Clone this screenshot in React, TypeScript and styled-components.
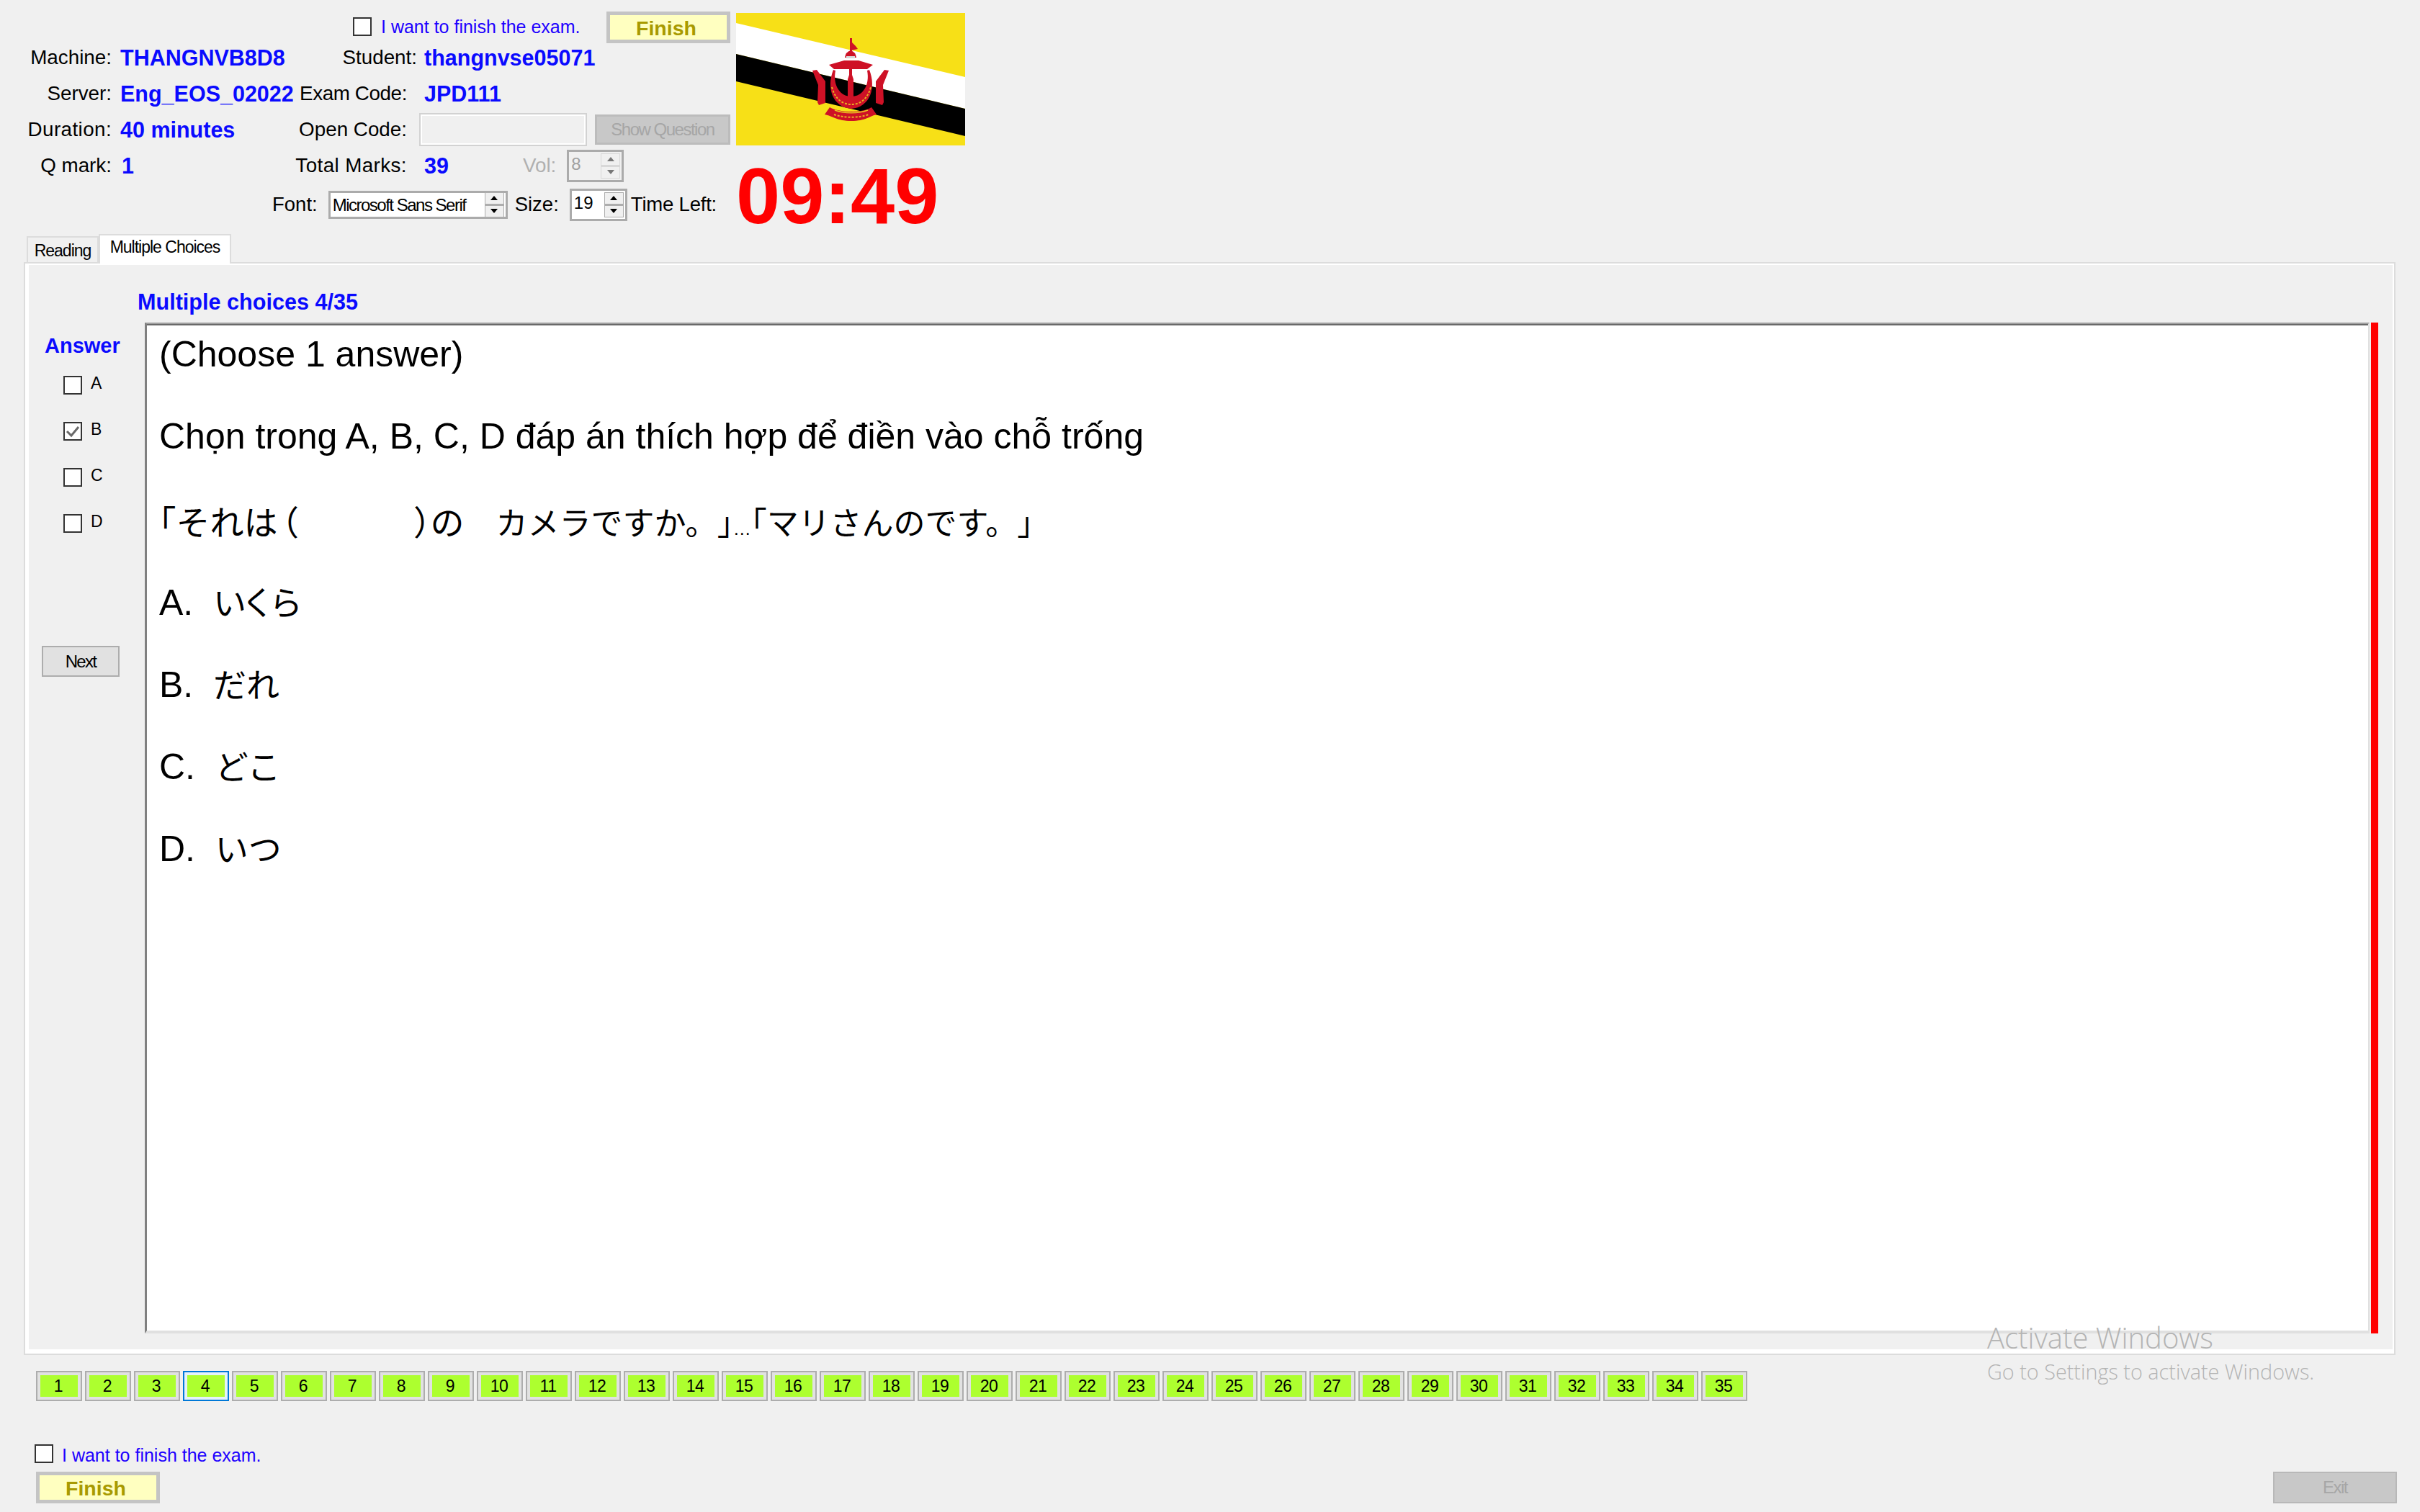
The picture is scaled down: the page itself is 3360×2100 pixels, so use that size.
import * as React from 'react'
import styled, { createGlobalStyle } from 'styled-components'

const SANS = `"Liberation Sans", Arial, sans-serif`
const BLUE = '#0a0aff'

const GlobalStyle = createGlobalStyle`
  html, body {
    margin: 0;
    width: 3360px;
    height: 2100px;
    overflow: hidden;
    background: #f0f0f0;
    font-family: ${SANS};
  }
`

const Page = styled.div`
  position: relative;
  width: 3360px;
  height: 2100px;
  overflow: hidden;
  background: #f0f0f0;
  color: #000;
`

const Header = styled.header`
  display: flex;
  height: 308px;
  padding-top: 16px;
`

const InfoColumn = styled.div`
  width: 1014px;
  display: flex;
  flex-direction: column;
`

const TopRow = styled.div`
  display: flex;
  align-items: flex-start;
  height: 39px;
  padding-left: 490px;
`

const FinishTopLabel = styled.label`
  display: flex;
  align-items: center;
  gap: 13px;
  width: 352px;
  height: 42px;
  font-size: 25px;
  color: #2000ff;
`

const CheckBox = styled.span`
  box-sizing: border-box;
  display: inline-flex;
  align-items: center;
  justify-content: center;
  flex: none;
  width: 26px;
  height: 26px;
  border: 2px solid #333;
  background: #fff;
`

const FinishButton = styled.button`
  box-sizing: border-box;
  width: 172px;
  height: 44px;
  padding: 2px 6px 0 0;
  border: 5px solid #c4c4c4;
  outline: none;
  background: #ffffc0;
  color: #a89a00;
  font-family: ${SANS};
  font-size: 28.5px;
  font-weight: 700;
  line-height: 32px;
`

const InfoGrid = styled.div`
  display: grid;
  grid-template-columns: 155px 255px 155px 449px;
  grid-auto-rows: 50px;
`

const Label = styled.span<{ $overhang?: number; $muted?: boolean; $track?: number }>`
  align-self: center;
  justify-self: end;
  margin-right: ${p => -(p.$overhang ?? 0)}px;
  font-size: 27.8px;
  line-height: 32px;
  letter-spacing: ${p => p.$track ?? 0}px;
  white-space: nowrap;
  color: ${p => (p.$muted ? '#b0b0b0' : '#000')};
`

const Value = styled.span<{ $indent: number }>`
  align-self: center;
  padding-left: ${p => p.$indent}px;
  font-size: 30.5px;
  font-weight: 700;
  line-height: 34px;
  white-space: nowrap;
  color: ${BLUE};
`

const ValueCell = styled.div`
  display: flex;
  align-items: center;
`

const OpenCodeInput = styled.div`
  box-sizing: border-box;
  width: 233px;
  height: 46px;
  margin-left: 17px;
  border: 4px solid #fff;
  outline: 2px solid #d2d2d2;
  outline-offset: -2px;
  background: #f0f0f0;
`

const ShowQuestion = styled.button`
  box-sizing: border-box;
  width: 188px;
  height: 42px;
  margin-left: 11px;
  padding: 0;
  border: 3px solid #bcbcbc;
  background: #c8c8c8;
  color: #a6a6a6;
  font-family: ${SANS};
  font-size: 24px;
  letter-spacing: -1.5px;
`

const VolGroup = styled.div`
  display: flex;
  align-items: center;
  margin-left: 103px;
  gap: 15px;
`

const FontRow = styled.div`
  display: flex;
  align-items: center;
  height: 58px;
  padding-left: 378px;
`

const Spinner = styled.div<{ $width: number; $height: number; $disabled?: boolean }>`
  box-sizing: border-box;
  display: flex;
  align-items: center;
  justify-content: space-between;
  width: ${p => p.$width}px;
  height: ${p => p.$height}px;
  padding: 0 2px 0 3px;
  border: 3px solid #ababab;
  background: ${p => (p.$disabled ? '#f0f0f0' : '#fff')};
  color: ${p => (p.$disabled ? '#a0a0a0' : '#000')};
  font-size: 24px;
  white-space: nowrap;
`

const SpinText = styled.span<{ $tight?: boolean }>`
  align-self: flex-start;
  line-height: 34px;
  letter-spacing: ${p => (p.$tight ? '-1.5px' : '0')};
`

const SpinButtons = styled.div<{ $disabled?: boolean }>`
  box-sizing: border-box;
  display: flex;
  flex-direction: column;
  flex: none;
  width: 27px;
  height: 35px;
  border: 1px solid ${p => (p.$disabled ? '#d8d8d8' : '#adadad')};
  background: ${p => (p.$disabled ? '#d8d8d8' : '#adadad')};
  gap: 3px;
`

const SpinPart = styled.div`
  flex: 1;
  display: flex;
  align-items: center;
  justify-content: center;
  background: #f0f0f0;
`

const Arrow = styled.span<{ $down?: boolean; $disabled?: boolean }>`
  width: 0;
  height: 0;
  border-left: 5px solid transparent;
  border-right: 5px solid transparent;
  ${p => (p.$down ? 'border-top' : 'border-bottom')}: 6px solid ${p => (p.$disabled ? '#777' : '#000')};
`

const FontLabel = styled.span<{ $gapRight: number; $gapLeft?: number; $tight?: boolean }>`
  margin: 0 ${p => p.$gapRight}px 0 ${p => p.$gapLeft ?? 0}px;
  font-size: 27.5px;
  white-space: nowrap;
  letter-spacing: ${p => (p.$tight ? '-0.2px' : '0')};
`

const FlagColumn = styled.div`
  display: flex;
  flex-direction: column;
  margin-left: 8px;
  padding-top: 2px;
`

const FlagSvg = styled.svg`
  display: block;
  flex: none;
  width: 318px;
  height: 184px;
`

const Timer = styled.div`
  margin: 10px 0 0 0;
  font-size: 110px;
  font-weight: 700;
  line-height: 120px;
  color: #ff0000;
  white-space: nowrap;
`

const Tabs = styled.div`
  display: flex;
  align-items: flex-end;
  box-sizing: border-box;
  height: 40px;
  padding-left: 37px;
`

const Tab = styled.div<{ $active?: boolean }>`
  box-sizing: border-box;
  display: flex;
  justify-content: center;
  height: ${p => (p.$active ? 41 : 36)}px;
  margin-bottom: ${p => (p.$active ? -2 : 0)}px;
  width: ${p => (p.$active ? 184 : 100)}px;
  border: 2px solid #dcdcdc;
  border-bottom: none;
  background: ${p => (p.$active ? '#fff' : '#f0f0f0')};
  font-size: 23px;
  letter-spacing: -1px;
  line-height: ${p => (p.$active ? 32 : 36)}px;
  position: relative;
  z-index: 1;
`

const Panel = styled.section`
  box-sizing: border-box;
  width: 3293px;
  height: 1518px;
  margin-left: 33px;
  border: 2px solid #dcdcdc;
  background: #f0f0f0;
  box-shadow: inset 5px 0 0 #fff, inset -2px 0 0 #fff, inset 0 -6px 0 #fff, inset 0 2px 0 #fff;
  padding: 2px 2px 6px 5px;
  display: flex;
  flex-direction: column;
`

const PanelTitle = styled.h2`
  box-sizing: border-box;
  height: 80px;
  margin: 0;
  padding: 34px 0 0 151px;
  font-size: 30.6px;
  font-weight: 700;
  line-height: 34px;
  color: ${BLUE};
`

const PanelBody = styled.div`
  display: flex;
  height: 1404px;
`

const AnswerColumn = styled.div`
  box-sizing: border-box;
  width: 161px;
  flex: none;
  display: flex;
  flex-direction: column;
`

const AnswerTitle = styled.div`
  margin: 17px 0 27px 22px;
  font-size: 29px;
  font-weight: 700;
  line-height: 30px;
  color: ${BLUE};
`

const OptionList = styled.div`
  display: flex;
  flex-direction: column;
  gap: 39px;
  padding-left: 48px;
`

const Option = styled.div`
  display: flex;
  align-items: center;
  gap: 12px;
  height: 25px;
  font-size: 23px;
  letter-spacing: -0.5px;
`

const OptionLetter = styled.span`
  position: relative;
  top: -2px;
`

const NextButton = styled.button`
  box-sizing: border-box;
  width: 108px;
  height: 43px;
  margin: 158px 0 0 18px;
  padding: 0;
  border: 2px solid #adadad;
  background: #e1e1e1;
  font-family: ${SANS};
  font-size: 24px;
  letter-spacing: -1.7px;
  color: #000;
`

const Question = styled.article`
  box-sizing: border-box;
  width: 3089px;
  flex: none;
  padding: 15px 0 0 17px;
  border-style: solid;
  border-width: 2px 2px 4px 3px;
  border-color: #a0a0a0 #e0e0e0 #e0e0e0 #808080;
  box-shadow: inset 0 2px 0 #696969;
  background: #fff;
  display: flex;
  flex-direction: column;
  gap: 59px;
`

const QuestionLine = styled.p`
  margin: 0;
  height: 55px;
  font-size: 50px;
  line-height: 55px;
  white-space: pre;
`

const Jp = styled.span<{ $size: number; $track?: number; $raise?: number }>`
  font-family: "Noto Sans CJK JP", sans-serif;
  font-size: ${p => p.$size}px;
  font-weight: 400;
  line-height: 55px;
  letter-spacing: ${p => p.$track ?? 0}px;
  vertical-align: ${p => p.$raise ?? 0}px;
  text-spacing-trim: space-all;
`

const HalfPunct = styled.span<{ $lead?: number }>`
  font-feature-settings: "halt";
  margin-left: ${p => p.$lead ?? 0}px;
`

const BlankRun = styled.span`
  font-size: 53px;
`

const Dots = styled.span`
  font-family: ${SANS};
  font-size: 25px;
`

const RedBar = styled.div`
  width: 10px;
  margin-left: 2px;
  background: #ff0000;
`

const NavRow = styled.nav`
  display: flex;
  gap: 4px;
  margin-top: 22px;
  padding-left: 50px;
`

const NavButton = styled.button<{ $current?: boolean }>`
  box-sizing: border-box;
  width: 64px;
  height: 42px;
  padding: 0;
  border: 2px solid ${p => (p.$current ? '#0078d7' : '#adadad')};
  background: ${p => (p.$current ? '#e5f1fb' : '#e1e1e1')};
  display: flex;
  align-items: stretch;
`

const NavFace = styled.span`
  flex: 1;
  margin: 4px;
  padding-right: 2px;
  background: #adff2f;
  font-family: ${SANS};
  font-size: 23px;
  line-height: 30px;
  letter-spacing: -0.5px;
  color: #000;
  text-align: center;
`

const Footer = styled.footer`
  display: flex;
  justify-content: space-between;
  align-items: flex-end;
  margin-top: 60px;
  padding: 0 32px 0 48px;
`

const FooterLeft = styled.div`
  display: flex;
  flex-direction: column;
  gap: 12px;
`

const FooterCheck = styled.label`
  display: flex;
  align-items: center;
  gap: 12px;
  height: 26px;
  font-size: 25px;
  color: #2000ff;
`

const FooterCheckText = styled.span`
  padding-top: 4px;
`

const FooterFinish = styled(FinishButton)`
  margin-left: 2px;
`

const ExitButton = styled.button`
  box-sizing: border-box;
  width: 172px;
  height: 44px;
  padding: 0;
  border: 2px solid #b8b8b8;
  background: #c8c8c8;
  color: #a6a6a6;
  font-family: ${SANS};
  font-size: 24px;
  letter-spacing: -1.5px;
`

const Watermark = styled.div`
  position: absolute;
  left: 2759px;
  top: 1832px;
  font-family: "Open Sans", "Noto Sans", sans-serif;
  font-weight: 300;
  color: #b4b4b4;
  pointer-events: none;
  white-space: nowrap;
`

const WatermarkTitle = styled.div`
  font-size: 40px;
  line-height: 52px;
`

const WatermarkText = styled.div`
  font-size: 28.8px;
  line-height: 38px;
  margin-top: 2px;
`

const BruneiFlag = () => (
  <FlagSvg viewBox="0 0 318 184" aria-label="Brunei flag">
    <rect width="318" height="184" fill="#f7e017" />
    <polygon points="0,14 318,89 318,133 0,57" fill="#fff" />
    <polygon points="0,57 318,133 318,171 0,95" fill="#000" />
    <g fill="#ce1126">
      <rect x="158" y="35" width="3" height="18" />
      <polygon points="160,40 166,46 169,50 160,52" />
      <path d="M151 62 Q152 54 159 52 Q166 54 167 62 Z" />
      <rect x="153" y="60" width="12" height="3" fill="#d8d8d8" />
      <polygon points="129,72 150,66 170,66 190,72 182,78 136,78" />
      <rect x="157" y="78" width="4" height="8" />
      <path d="M135 79 C125 104 134 131 160 133 C186 131 195 104 185 79 L182 80 C186 100 176 116 160 116 C144 116 134 100 138 80 Z" />
      <polygon points="155,119 155,92 157,86 161,86 163,92 163,119 168,124 150,124" />
      <path d="M106 80 L112 79 L124 95 L124 125 L115 128 L113 124 L114 100 Z" />
      <path d="M212 80 L206 79 L194 95 L194 125 L203 128 L205 124 L204 100 Z" />
      <path d="M130 131 C145 139 175 139 188 131 L195 141 C186 143 180 150 160 150 C140 150 134 143 123 141 Z" />
    </g>
    <g fill="none" stroke="#e8b020" strokeWidth="2" strokeDasharray="3 2">
      <path d="M133 103 C138 122 150 127 160 127 C170 127 182 122 187 103" />
      <path d="M136 141 C148 146 172 146 184 141" />
    </g>
    <path d="M137 135 C150 140 170 140 183 135" fill="none" stroke="#e8c020" strokeWidth="1.5" />
  </FlagSvg>
)

const CheckMark = () => (
  <svg width="20" height="18" viewBox="0 0 20 18" aria-hidden="true">
    <path d="M2 9 L8 15 L18 3" fill="none" stroke="#6a6a6a" strokeWidth="3" />
  </svg>
)

const SpinArrows = ({ disabled }: { disabled?: boolean }) => (
  <SpinButtons $disabled={disabled}>
    <SpinPart><Arrow $disabled={disabled} /></SpinPart>
    <SpinPart><Arrow $down $disabled={disabled} /></SpinPart>
  </SpinButtons>
)

const OPTIONS = ['A', 'B', 'C', 'D']
const QUESTIONS = Array.from({ length: 35 }, (_, i) => i + 1)

export default function App() {
  return (
    <Page>
      <GlobalStyle />
      <Header>
        <InfoColumn>
          <TopRow>
            <FinishTopLabel>
              <CheckBox />
              I want to finish the exam.
            </FinishTopLabel>
            <FinishButton>Finish</FinishButton>
          </TopRow>
          <InfoGrid>
            <Label>Machine:</Label>
            <Value $indent={12}>THANGNVB8D8</Value>
            <Label $overhang={14}>Student:</Label>
            <Value $indent={24}>thangnvse05071</Value>

            <Label>Server:</Label>
            <Value $indent={12}>Eng_EOS_02022</Value>
            <Label $track={-0.4}>Exam Code:</Label>
            <Value $indent={24}>JPD111</Value>

            <Label $track={0.4}>Duration:</Label>
            <Value $indent={12}>40 minutes</Value>
            <Label>Open Code:</Label>
            <ValueCell>
              <OpenCodeInput />
              <ShowQuestion>Show Question</ShowQuestion>
            </ValueCell>

            <Label>Q mark:</Label>
            <Value $indent={14}>1</Value>
            <Label $track={0.4}>Total Marks:</Label>
            <ValueCell>
              <Value $indent={24}>39</Value>
              <VolGroup>
                <Label $muted>Vol:</Label>
                <Spinner $width={79} $height={45} $disabled>
                  <SpinText>8</SpinText>
                  <SpinArrows disabled />
                </Spinner>
              </VolGroup>
            </ValueCell>
          </InfoGrid>
          <FontRow>
            <FontLabel $gapRight={15}>Font:</FontLabel>
            <Spinner $width={249} $height={39}>
              <SpinText $tight>Microsoft Sans Serif</SpinText>
              <SpinArrows />
            </Spinner>
            <FontLabel $gapLeft={10} $gapRight={15}>Size:</FontLabel>
            <Spinner $width={80} $height={45}>
              <SpinText>19</SpinText>
              <SpinArrows />
            </Spinner>
            <FontLabel $gapLeft={5} $gapRight={0} $tight>Time Left:</FontLabel>
          </FontRow>
        </InfoColumn>
        <FlagColumn>
          <BruneiFlag />
          <Timer>09:49</Timer>
        </FlagColumn>
      </Header>

      <Tabs>
        <Tab>Reading</Tab>
        <Tab $active>Multiple Choices</Tab>
      </Tabs>

      <Panel>
        <PanelTitle>Multiple choices 4/35</PanelTitle>
        <PanelBody>
          <AnswerColumn>
            <AnswerTitle>Answer</AnswerTitle>
            <OptionList>
              {OPTIONS.map(o => (
                <Option key={o}>
                  <CheckBox>{o === 'B' && <CheckMark />}</CheckBox>
                  <OptionLetter>{o}</OptionLetter>
                </Option>
              ))}
            </OptionList>
            <NextButton>Next</NextButton>
          </AnswerColumn>
          <Question>
            <QuestionLine>(Choose 1 answer)</QuestionLine>
            <QuestionLine>Chọn trong A, B, C, D đáp án thích hợp để điền vào chỗ trống</QuestionLine>
            <QuestionLine>
              <Jp $size={47} $raise={3}><HalfPunct>「</HalfPunct>それは<HalfPunct $lead={6}>（</HalfPunct><BlankRun>　　　</BlankRun><HalfPunct>）</HalfPunct>の</Jp><Jp $size={44} $raise={3}>　カメラですか。<HalfPunct>」</HalfPunct><Dots>…</Dots><HalfPunct>「</HalfPunct>マリさんのです。<HalfPunct>」</HalfPunct></Jp>
            </QuestionLine>
            <QuestionLine>A.  <Jp $size={46} $track={-7}>いくら</Jp></QuestionLine>
            <QuestionLine>B.  <Jp $size={46}>だれ</Jp></QuestionLine>
            <QuestionLine>C.  <Jp $size={46}>どこ</Jp></QuestionLine>
            <QuestionLine>D.  <Jp $size={46}>いつ</Jp></QuestionLine>
          </Question>
          <RedBar />
        </PanelBody>
      </Panel>

      <NavRow>
        {QUESTIONS.map(n => (
          <NavButton key={n} $current={n === 4}>
            <NavFace>{n}</NavFace>
          </NavButton>
        ))}
      </NavRow>

      <Footer>
        <FooterLeft>
          <FooterCheck>
            <CheckBox />
            <FooterCheckText>I want to finish the exam.</FooterCheckText>
          </FooterCheck>
          <FooterFinish>Finish</FooterFinish>
        </FooterLeft>
        <ExitButton>Exit</ExitButton>
      </Footer>

      <Watermark>
        <WatermarkTitle>Activate Windows</WatermarkTitle>
        <WatermarkText>Go to Settings to activate Windows.</WatermarkText>
      </Watermark>
    </Page>
  )
}
